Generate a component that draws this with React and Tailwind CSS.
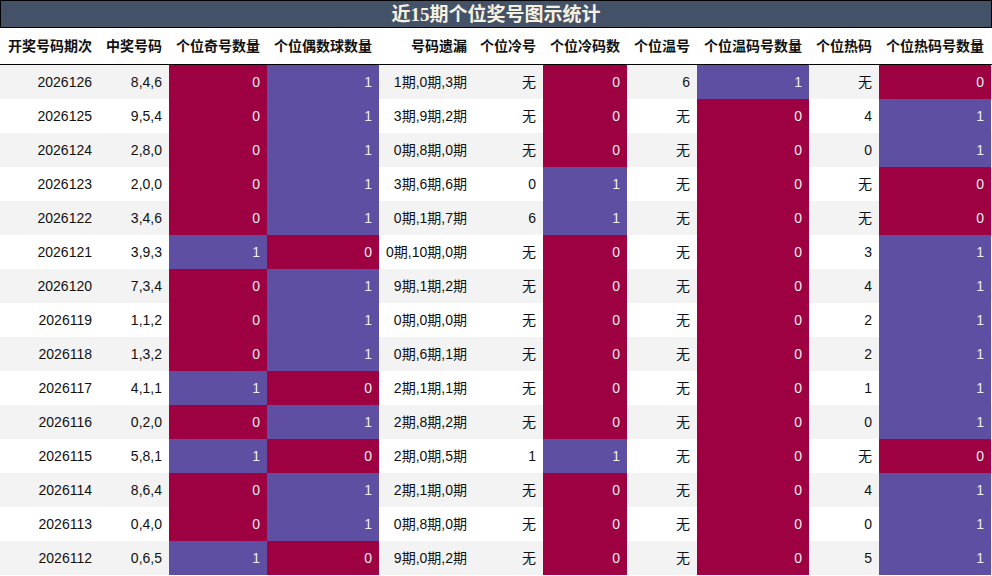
import React from 'react';

const COLS = 'grid grid-cols-[99px_70px_98px_112px_95px_69px_84px_70px_112px_70px_112px]';

const headers = [
  '开奖号码期次',
  '中奖号码',
  '个位奇号数量',
  '个位偶数球数量',
  '号码遗漏',
  '个位冷号',
  '个位冷码数',
  '个位温号',
  '个位温码号数量',
  '个位热码',
  '个位热码号数量',
];

// period, numbers, odd, even, miss, cold, coldCount, warm, warmCount, hot, hotCount
const rows = [
  ['2026126', '8,4,6', 0, 1, '1期,0期,3期', '无', 0, '6', 1, '无', 0],
  ['2026125', '9,5,4', 0, 1, '3期,9期,2期', '无', 0, '无', 0, '4', 1],
  ['2026124', '2,8,0', 0, 1, '0期,8期,0期', '无', 0, '无', 0, '0', 1],
  ['2026123', '2,0,0', 0, 1, '3期,6期,6期', '0', 1, '无', 0, '无', 0],
  ['2026122', '3,4,6', 0, 1, '0期,1期,7期', '6', 1, '无', 0, '无', 0],
  ['2026121', '3,9,3', 1, 0, '0期,10期,0期', '无', 0, '无', 0, '3', 1],
  ['2026120', '7,3,4', 0, 1, '9期,1期,2期', '无', 0, '无', 0, '4', 1],
  ['2026119', '1,1,2', 0, 1, '0期,0期,0期', '无', 0, '无', 0, '2', 1],
  ['2026118', '1,3,2', 0, 1, '0期,6期,1期', '无', 0, '无', 0, '2', 1],
  ['2026117', '4,1,1', 1, 0, '2期,1期,1期', '无', 0, '无', 0, '1', 1],
  ['2026116', '0,2,0', 0, 1, '2期,8期,2期', '无', 0, '无', 0, '0', 1],
  ['2026115', '5,8,1', 1, 0, '2期,0期,5期', '1', 1, '无', 0, '无', 0],
  ['2026114', '8,6,4', 0, 1, '2期,1期,0期', '无', 0, '无', 0, '4', 1],
  ['2026113', '0,4,0', 0, 1, '0期,8期,0期', '无', 0, '无', 0, '0', 1],
  ['2026112', '0,6,5', 1, 0, '9期,0期,2期', '无', 0, '无', 0, '5', 1],
];

const countCols = [2, 3, 6, 8, 10];

function Cell({ value, colored }) {
  if (colored) {
    return (
      <div
        className={`flex items-center justify-end pr-[7px] text-[#eeeeee] ${
          value === 1 ? 'bg-[#5e4fa2]' : 'bg-[#9e0142]'
        }`}
      >
        {value}
      </div>
    );
  }
  return <div className="flex items-center justify-end pr-[7px] whitespace-nowrap">{value}</div>;
}

export default function App() {
  return (
    <div
      className="w-[992px] h-[576px] overflow-hidden bg-white text-[#111] text-[14px]"
      style={{ fontFamily: '"Liberation Sans", "Noto Sans CJK SC", sans-serif' }}
    >
      {/* Title */}
      <div className="h-[28px] border border-black bg-[#445267] flex items-center justify-center">
        <span
          className="text-[19px] font-bold text-[#f7f1e1] leading-none"
          style={{ fontFamily: '"Liberation Serif", "Noto Sans CJK SC", serif' }}
        >
          近15期个位奖号图示统计
        </span>
      </div>

      {/* Header */}
      <div className={`${COLS} h-[37px] border-b border-black font-bold`}>
        {headers.map((h) => (
          <div key={h} className="flex items-center justify-end pr-[7px] whitespace-nowrap">
            {h}
          </div>
        ))}
      </div>

      {/* Body */}
      {rows.map((row, i) => (
        <div
          key={row[0]}
          className={`${COLS} h-[34px] ${i % 2 === 0 ? 'bg-[#f3f3f3]' : 'bg-white'}`}
        >
          {row.map((v, j) => (
            <Cell key={j} value={v} colored={countCols.includes(j)} />
          ))}
        </div>
      ))}
    </div>
  );
}
